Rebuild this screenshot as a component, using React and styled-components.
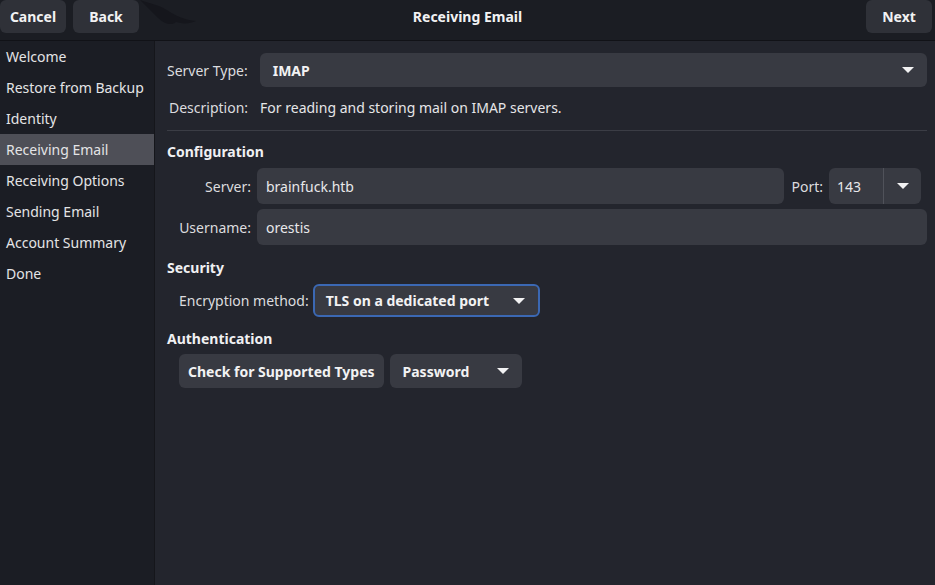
import React from 'react';
import styled, { createGlobalStyle } from 'styled-components';

const GlobalStyle = createGlobalStyle`
  html, body {
    margin: 0;
    padding: 0;
    background: #23252d;
  }
  body {
    font-family: "Noto Sans", "Open Sans", sans-serif;
    font-size: 14px;
    color: #e6e6e8;
  }
`;

const Window = styled.div`
  width: 935px;
  height: 585px;
  display: flex;
  flex-direction: column;
  overflow: hidden;
  background: #23252d;
`;

const HeaderBar = styled.div`
  position: relative;
  height: 40px;
  flex-shrink: 0;
  display: grid;
  grid-template-columns: 1fr auto 1fr;
  align-items: start;
  background: #1b1d23;
  border-bottom: 1px solid #111217;
`;

const HeaderGroup = styled.div`
  display: flex;
  gap: 7px;
  justify-content: ${(p) => (p.$end ? 'flex-end' : 'flex-start')};
  padding-right: ${(p) => (p.$end ? 3 : 0)}px;
  z-index: 1;
`;

const HeaderButton = styled.button`
  height: 33px;
  width: 66px;
  padding: 0;
  border: none;
  border-radius: 6px;
  background: #2f3138;
  color: #f2f2f3;
  font-family: inherit;
  font-size: 14px;
  font-weight: 700;
`;

const Title = styled.div`
  height: 33px;
  line-height: 33px;
  text-align: center;
  font-weight: 700;
  color: #f2f2f3;
  z-index: 1;
`;

const Dragon = styled.svg`
  position: absolute;
  left: 138px;
  top: 0;
`;

const Body = styled.div`
  flex: 1;
  display: flex;
  min-height: 0;
`;

const Sidebar = styled.div`
  width: 154px;
  flex-shrink: 0;
  background: #1b1d24;
  border-right: 1px solid #15161b;
  display: flex;
  flex-direction: column;
`;

const SideItem = styled.div`
  height: 31px;
  line-height: 31px;
  padding-left: 6px;
  white-space: nowrap;
  color: #e4e4e6;
  background: ${(p) => (p.$active ? '#4e4f57' : 'transparent')};
`;

const Content = styled.div`
  flex: 1;
  padding: 12px 8px 0 12px;
  display: flex;
  flex-direction: column;
`;

const Row = styled.div`
  display: flex;
  align-items: center;
  gap: ${(p) => p.$gap ?? 6}px;
  padding-left: ${(p) => p.$indent || 0}px;
  margin-top: ${(p) => p.$mt || 0}px;
`;

const Label = styled.span`
  width: ${(p) => (p.$w ? `${p.$w}px` : 'auto')};
  text-align: right;
  white-space: nowrap;
  color: #dcdcdf;
  flex-shrink: 0;
`;

const Combo = styled.div`
  height: ${(p) => p.$h || 34}px;
  width: ${(p) => (p.$w ? `${p.$w}px` : 'auto')};
  flex: ${(p) => (p.$w ? '0 0 auto' : 1)};
  box-sizing: border-box;
  display: flex;
  align-items: center;
  justify-content: space-between;
  padding: 0 13px 0 ${(p) => (p.$focus ? 11 : 13)}px;
  border-radius: 6px;
  background: #383a42;
  border: ${(p) => (p.$focus ? '2px solid #3b68b3' : 'none')};
  font-weight: 700;
  color: #f2f2f3;
`;

const Arrow = styled.span`
  width: 0;
  height: 0;
  border-left: 6px solid transparent;
  border-right: 6px solid transparent;
  border-top: 6px solid #f2f2f3;
  margin-left: 12px;
`;

const Entry = styled.div`
  height: 36px;
  flex: 1;
  box-sizing: border-box;
  display: flex;
  align-items: center;
  padding-left: 9px;
  border-radius: 6px;
  background: #383a42;
  color: #e8e8ea;
`;

const SpinCombo = styled.div`
  width: 92px;
  height: 36px;
  margin-right: 6px;
  display: flex;
  border-radius: 6px;
  background: #383a42;
  overflow: hidden;
  flex-shrink: 0;
`;

const SpinText = styled.div`
  width: 46px;
  display: flex;
  align-items: center;
  padding-left: 8px;
  border-right: 1px solid #50525a;
  color: #e8e8ea;
`;

const SpinButton = styled.div`
  flex: 1;
  display: flex;
  align-items: center;
  justify-content: center;
  & > span { margin-left: 0; }
`;

const Separator = styled.div`
  height: 1px;
  background: #3b3d45;
  margin-top: 13px;
`;

const Heading = styled.div`
  font-weight: 700;
  color: #f0f0f2;
  margin-top: ${(p) => p.$mt || 0}px;
  height: 22px;
  line-height: 22px;
`;

const Button = styled.div`
  height: 34px;
  box-sizing: border-box;
  display: flex;
  align-items: center;
  padding: 0 9px;
  border-radius: 6px;
  background: #383a42;
  font-weight: 700;
  color: #f2f2f3;
  white-space: nowrap;
`;

const Description = styled.span`
  color: #e6e6e8;
`;

const steps = [
  'Welcome',
  'Restore from Backup',
  'Identity',
  'Receiving Email',
  'Receiving Options',
  'Sending Email',
  'Account Summary',
  'Done',
];

export default function App() {
  return (
    <Window>
      <GlobalStyle />
      <HeaderBar>
        <Dragon width="70" height="40" viewBox="0 0 70 40">
          <path
            d="M2 0 C14 4 24 6 32 12 C40 17 48 20 58 21 C52 24 44 24 38 22 C34 26 26 24 20 18 C14 12 8 6 2 0 Z"
            fill="#15161c"
          />
        </Dragon>
        <HeaderGroup>
          <HeaderButton>Cancel</HeaderButton>
          <HeaderButton>Back</HeaderButton>
        </HeaderGroup>
        <Title>Receiving Email</Title>
        <HeaderGroup $end>
          <HeaderButton>Next</HeaderButton>
        </HeaderGroup>
      </HeaderBar>
      <Body>
        <Sidebar>
          {steps.map((s) => (
            <SideItem key={s} $active={s === 'Receiving Email'}>
              {s}
            </SideItem>
          ))}
        </Sidebar>
        <Content>
          <Row $gap={12}>
            <Label>Server Type:</Label>
            <Combo>
              IMAP
              <Arrow />
            </Combo>
          </Row>
          <Row $gap={12} $mt={11} $indent={2}>
            <Label>Description:</Label>
            <Description>For reading and storing mail on IMAP servers.</Description>
          </Row>
          <Separator />
          <Heading $mt={10}>Configuration</Heading>
          <Row $mt={5}>
            <Label $w={84}>Server:</Label>
            <Entry>brainfuck.htb</Entry>
            <Label style={{ marginLeft: 1 }}>Port:</Label>
            <SpinCombo>
              <SpinText>143</SpinText>
              <SpinButton>
                <Arrow />
              </SpinButton>
            </SpinCombo>
          </Row>
          <Row $mt={5}>
            <Label $w={84}>Username:</Label>
            <Entry>orestis</Entry>
          </Row>
          <Heading $mt={12}>Security</Heading>
          <Row $mt={5} $indent={12} $gap={4}>
            <Label>Encryption method:</Label>
            <Combo $w={227} $h={33} $focus>
              TLS on a dedicated port
              <Arrow />
            </Combo>
          </Row>
          <Heading $mt={11}>Authentication</Heading>
          <Row $mt={4} $indent={12}>
            <Button>Check for Supported Types</Button>
            <Combo $w={132}>
              Password
              <Arrow />
            </Combo>
          </Row>
        </Content>
      </Body>
    </Window>
  );
}
